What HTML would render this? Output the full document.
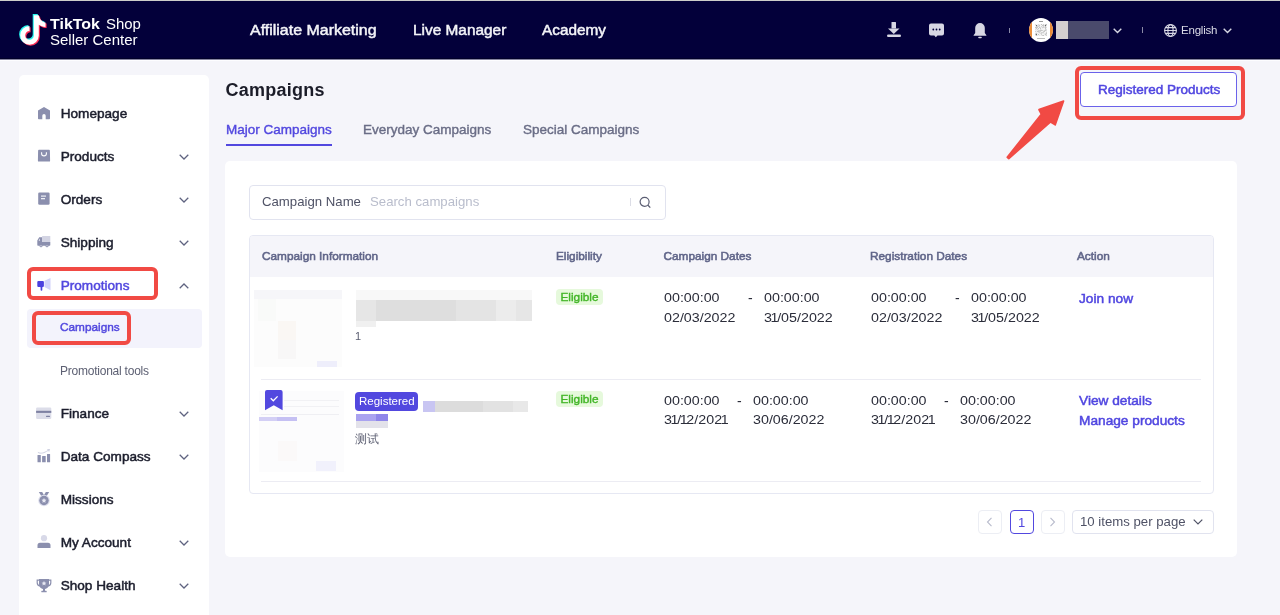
<!DOCTYPE html>
<html><head><meta charset="utf-8">
<style>
*{margin:0;padding:0;box-sizing:border-box}
html,body{width:1280px;height:615px;overflow:hidden;background:#f5f5fa;font-family:"Liberation Sans",sans-serif}
body{position:relative}
.a{position:absolute}
.t{position:absolute;line-height:1;white-space:nowrap}
.hdr{left:0;top:0;width:1280px;height:59px;background:#03003a;border-top:1px solid #cdcdca}
.nav{color:#f4f4f8;font-size:14px;-webkit-text-stroke:0.45px #f4f4f8;top:22.7px;transform-origin:0 0}
.side{left:19px;top:75px;width:190px;height:560px;background:#fff;border-radius:5px}
.si{color:#1c1e2d;font-weight:normal;font-size:13.6px;-webkit-text-stroke:0.5px #1c1e2d;left:60.7px}
.ch{position:absolute;left:178.6px;width:10px;height:6px;margin-top:-0.5px}
.card{left:225px;top:161px;width:1012px;height:395.5px;background:#fff;border-radius:5px}
.th{color:#62678a;font-size:11.8px;-webkit-text-stroke:0.55px #5f6488;top:250.5px}
.dt{position:absolute;color:#2b2d3a;font-size:13.6px;line-height:19.7px;white-space:nowrap;transform:scaleX(1.05);transform-origin:0 0}
.dt i{font-style:normal;margin:0 -1.3px}
.lnk{color:#5046e0;font-size:13.7px;-webkit-text-stroke:0.5px #5046e0;left:1079px}
.elig{position:absolute;left:556px;width:47px;height:16px;background:#e6f9dc;color:#41b526;font-size:11.8px;-webkit-text-stroke:0.4px #41b526;border-radius:4px;text-align:center;line-height:16px}
.red{position:absolute;border:4px solid #f14a44;border-radius:6px}
.sep{position:absolute;left:261px;width:940px;height:1px;background:#ececf3}
.pg{position:absolute;top:510px;height:24px;border:1px solid #eceef4;border-radius:4px;background:#fff}
svg{position:absolute;overflow:visible}
</style></head><body><div style="position:absolute;left:0;top:0;width:1280px;height:615px;will-change:transform">

<!-- HEADER -->
<div class="a hdr"></div>
<div class="a" style="left:0;top:58px;width:1280px;height:1px;background:#01002a"></div><div class="a" style="left:0;top:59px;width:1280px;height:1px;background:#85849f"></div><div class="a" style="left:0;top:60px;width:1280px;height:1px;background:#fdfdff"></div>

<!-- logo -->
<svg style="left:18px;top:13px" width="32" height="35" viewBox="0 0 32 35">
  <path d="M15.8 2.2H20.8C21.2 5.8 24 9.3 27.5 9.5V14C24.8 14 22.5 13 20.8 11.8V22.4A9.3 9.3 0 1 1 11.5 13.1V18.1A4.3 4.3 0 1 0 15.8 22.4Z" fill="#25f4ee" transform="translate(-1.1,-1.1)"/>
  <path d="M15.8 2.2H20.8C21.2 5.8 24 9.3 27.5 9.5V14C24.8 14 22.5 13 20.8 11.8V22.4A9.3 9.3 0 1 1 11.5 13.1V18.1A4.3 4.3 0 1 0 15.8 22.4Z" fill="#fe2c55" transform="translate(1.1,1.1)"/>
  <path d="M15.8 2.2H20.8C21.2 5.8 24 9.3 27.5 9.5V14C24.8 14 22.5 13 20.8 11.8V22.4A9.3 9.3 0 1 1 11.5 13.1V18.1A4.3 4.3 0 1 0 15.8 22.4Z" fill="#fff"/>
</svg>
<div class="t" style="left:50px;top:17.3px;font-size:14.5px;font-weight:bold;color:#fff;transform:scaleX(1.1);transform-origin:0 0">TikTok</div>
<div class="t" style="left:106px;top:17.3px;font-size:14.5px;color:#fff;transform:scaleX(1.03);transform-origin:0 0">Shop</div>
<div class="t" style="left:50px;top:31.5px;font-size:15px;color:#fff">Seller Center</div>

<div class="t nav" style="left:250px;transform:scaleX(1.14)">Affiliate Marketing</div>
<div class="t nav" style="left:412.5px;transform:scaleX(1.1)">Live Manager</div>
<div class="t nav" style="left:541.5px;transform:scaleX(1.095)">Academy</div>

<!-- header right icons -->
<svg style="left:886px;top:21px" width="16" height="17" viewBox="0 0 16 17" fill="#d7d7e3">
  <rect x="5.5" y="1" width="4.5" height="6.5" rx="0.5"/>
  <path d="M2 7.5h11.5L7.75 13z"/>
  <rect x="1" y="13.5" width="14" height="2.6" rx="1.3"/>
</svg>
<svg style="left:928px;top:22px" width="17" height="16" viewBox="0 0 17 16">
  <path fill="#d7d7e3" d="M3 1.5h11a2 2 0 0 1 2 2v8a2 2 0 0 1-2 2H9.5L7.8 15.2 6.3 13.5H3a2 2 0 0 1-2-2v-8a2 2 0 0 1 2-2z"/>
  <circle cx="5.3" cy="7.5" r="0.9" fill="#03003a"/><circle cx="8.5" cy="7.5" r="0.9" fill="#03003a"/><circle cx="11.7" cy="7.5" r="0.9" fill="#03003a"/>
</svg>
<svg style="left:972px;top:22px" width="16" height="17" viewBox="0 0 16 17" fill="#d7d7e3">
  <path d="M8 1a4.8 4.8 0 0 1 4.8 4.8v5.2l1.6 2.2v.6H1.6v-.6L3.2 11V5.8A4.8 4.8 0 0 1 8 1z"/>
  <rect x="6.2" y="14.7" width="3.6" height="1.6" rx="0.8"/>
</svg>
<div class="a" style="left:1009px;top:28px;width:1px;height:5px;background:#8a8aa6"></div>
<!-- avatar -->
<div class="a" style="left:1029px;top:18px;width:24px;height:24px;border-radius:50%;background:#fff;overflow:hidden">
  <div class="a" style="left:-2px;top:0;width:5px;height:24px;background:#ea8d3a"></div>
  <div class="a" style="left:21.3px;top:0;width:5px;height:24px;background:#ea8d3a"></div>
  <svg style="left:6px;top:6px" width="12" height="12" viewBox="0 0 12 12" shape-rendering="crispEdges"><rect x="0" y="0" width="1" height="1" fill="#dedede"/><rect x="1" y="0" width="1" height="1" fill="#f4f4f4"/><rect x="2" y="0" width="1" height="1" fill="#f4f4f4"/><rect x="3" y="0" width="1" height="1" fill="#dedede"/><rect x="4" y="0" width="1" height="1" fill="#ebebeb"/><rect x="5" y="0" width="1" height="1" fill="#f4f4f4"/><rect x="6" y="0" width="1" height="1" fill="#c4c4c4"/><rect x="7" y="0" width="1" height="1" fill="#f4f4f4"/><rect x="8" y="0" width="1" height="1" fill="#d2d2d2"/><rect x="9" y="0" width="1" height="1" fill="#f4f4f4"/><rect x="10" y="0" width="1" height="1" fill="#d2d2d2"/><rect x="11" y="0" width="1" height="1" fill="#c4c4c4"/><rect x="0" y="1" width="1" height="1" fill="#ebebeb"/><rect x="1" y="1" width="1" height="1" fill="#f4f4f4"/><rect x="2" y="1" width="1" height="1" fill="#dedede"/><rect x="3" y="1" width="1" height="1" fill="#dedede"/><rect x="4" y="1" width="1" height="1" fill="#c4c4c4"/><rect x="5" y="1" width="1" height="1" fill="#f4f4f4"/><rect x="6" y="1" width="1" height="1" fill="#f4f4f4"/><rect x="7" y="1" width="1" height="1" fill="#c4c4c4"/><rect x="8" y="1" width="1" height="1" fill="#c4c4c4"/><rect x="9" y="1" width="1" height="1" fill="#dedede"/><rect x="10" y="1" width="1" height="1" fill="#dedede"/><rect x="11" y="1" width="1" height="1" fill="#dedede"/><rect x="0" y="2" width="1" height="1" fill="#f4f4f4"/><rect x="1" y="2" width="1" height="1" fill="#c4c4c4"/><rect x="2" y="2" width="1" height="1" fill="#d2d2d2"/><rect x="3" y="2" width="1" height="1" fill="#d2d2d2"/><rect x="4" y="2" width="1" height="1" fill="#dedede"/><rect x="5" y="2" width="1" height="1" fill="#f4f4f4"/><rect x="6" y="2" width="1" height="1" fill="#d2d2d2"/><rect x="7" y="2" width="1" height="1" fill="#ebebeb"/><rect x="8" y="2" width="1" height="1" fill="#d2d2d2"/><rect x="9" y="2" width="1" height="1" fill="#ebebeb"/><rect x="10" y="2" width="1" height="1" fill="#c4c4c4"/><rect x="11" y="2" width="1" height="1" fill="#f4f4f4"/><rect x="0" y="3" width="1" height="1" fill="#c4c4c4"/><rect x="1" y="3" width="1" height="1" fill="#c4c4c4"/><rect x="2" y="3" width="1" height="1" fill="#c4c4c4"/><rect x="3" y="3" width="1" height="1" fill="#f4f4f4"/><rect x="4" y="3" width="1" height="1" fill="#c4c4c4"/><rect x="5" y="3" width="1" height="1" fill="#dedede"/><rect x="6" y="3" width="1" height="1" fill="#ebebeb"/><rect x="7" y="3" width="1" height="1" fill="#d2d2d2"/><rect x="8" y="3" width="1" height="1" fill="#d2d2d2"/><rect x="9" y="3" width="1" height="1" fill="#dedede"/><rect x="10" y="3" width="1" height="1" fill="#c4c4c4"/><rect x="11" y="3" width="1" height="1" fill="#dedede"/><rect x="0" y="4" width="1" height="1" fill="#ebebeb"/><rect x="1" y="4" width="1" height="1" fill="#c4c4c4"/><rect x="2" y="4" width="1" height="1" fill="#ebebeb"/><rect x="3" y="4" width="1" height="1" fill="#c4c4c4"/><rect x="4" y="4" width="1" height="1" fill="#f4f4f4"/><rect x="5" y="4" width="1" height="1" fill="#c4c4c4"/><rect x="6" y="4" width="1" height="1" fill="#f4f4f4"/><rect x="7" y="4" width="1" height="1" fill="#ebebeb"/><rect x="8" y="4" width="1" height="1" fill="#f4f4f4"/><rect x="9" y="4" width="1" height="1" fill="#f4f4f4"/><rect x="10" y="4" width="1" height="1" fill="#c4c4c4"/><rect x="11" y="4" width="1" height="1" fill="#f4f4f4"/><rect x="0" y="5" width="1" height="1" fill="#dedede"/><rect x="1" y="5" width="1" height="1" fill="#ebebeb"/><rect x="2" y="5" width="1" height="1" fill="#d2d2d2"/><rect x="3" y="5" width="1" height="1" fill="#ebebeb"/><rect x="4" y="5" width="1" height="1" fill="#f4f4f4"/><rect x="5" y="5" width="1" height="1" fill="#dedede"/><rect x="6" y="5" width="1" height="1" fill="#ebebeb"/><rect x="7" y="5" width="1" height="1" fill="#f4f4f4"/><rect x="8" y="5" width="1" height="1" fill="#f4f4f4"/><rect x="9" y="5" width="1" height="1" fill="#f4f4f4"/><rect x="10" y="5" width="1" height="1" fill="#d2d2d2"/><rect x="11" y="5" width="1" height="1" fill="#dedede"/><rect x="0" y="6" width="1" height="1" fill="#f4f4f4"/><rect x="1" y="6" width="1" height="1" fill="#ebebeb"/><rect x="2" y="6" width="1" height="1" fill="#ebebeb"/><rect x="3" y="6" width="1" height="1" fill="#d2d2d2"/><rect x="4" y="6" width="1" height="1" fill="#d2d2d2"/><rect x="5" y="6" width="1" height="1" fill="#c4c4c4"/><rect x="6" y="6" width="1" height="1" fill="#c4c4c4"/><rect x="7" y="6" width="1" height="1" fill="#d2d2d2"/><rect x="8" y="6" width="1" height="1" fill="#ebebeb"/><rect x="9" y="6" width="1" height="1" fill="#d2d2d2"/><rect x="10" y="6" width="1" height="1" fill="#c4c4c4"/><rect x="11" y="6" width="1" height="1" fill="#dedede"/><rect x="0" y="7" width="1" height="1" fill="#d2d2d2"/><rect x="1" y="7" width="1" height="1" fill="#ebebeb"/><rect x="2" y="7" width="1" height="1" fill="#c4c4c4"/><rect x="3" y="7" width="1" height="1" fill="#c4c4c4"/><rect x="4" y="7" width="1" height="1" fill="#d2d2d2"/><rect x="5" y="7" width="1" height="1" fill="#d2d2d2"/><rect x="6" y="7" width="1" height="1" fill="#f4f4f4"/><rect x="7" y="7" width="1" height="1" fill="#f4f4f4"/><rect x="8" y="7" width="1" height="1" fill="#d2d2d2"/><rect x="9" y="7" width="1" height="1" fill="#c4c4c4"/><rect x="10" y="7" width="1" height="1" fill="#f4f4f4"/><rect x="11" y="7" width="1" height="1" fill="#ebebeb"/><rect x="0" y="8" width="1" height="1" fill="#f4f4f4"/><rect x="1" y="8" width="1" height="1" fill="#ebebeb"/><rect x="2" y="8" width="1" height="1" fill="#f4f4f4"/><rect x="3" y="8" width="1" height="1" fill="#dedede"/><rect x="4" y="8" width="1" height="1" fill="#d2d2d2"/><rect x="5" y="8" width="1" height="1" fill="#ebebeb"/><rect x="6" y="8" width="1" height="1" fill="#d2d2d2"/><rect x="7" y="8" width="1" height="1" fill="#d2d2d2"/><rect x="8" y="8" width="1" height="1" fill="#d2d2d2"/><rect x="9" y="8" width="1" height="1" fill="#f4f4f4"/><rect x="10" y="8" width="1" height="1" fill="#f4f4f4"/><rect x="11" y="8" width="1" height="1" fill="#d2d2d2"/><rect x="0" y="9" width="1" height="1" fill="#dedede"/><rect x="1" y="9" width="1" height="1" fill="#c4c4c4"/><rect x="2" y="9" width="1" height="1" fill="#ebebeb"/><rect x="3" y="9" width="1" height="1" fill="#f4f4f4"/><rect x="4" y="9" width="1" height="1" fill="#ebebeb"/><rect x="5" y="9" width="1" height="1" fill="#dedede"/><rect x="6" y="9" width="1" height="1" fill="#d2d2d2"/><rect x="7" y="9" width="1" height="1" fill="#ebebeb"/><rect x="8" y="9" width="1" height="1" fill="#ebebeb"/><rect x="9" y="9" width="1" height="1" fill="#ebebeb"/><rect x="10" y="9" width="1" height="1" fill="#dedede"/><rect x="11" y="9" width="1" height="1" fill="#c4c4c4"/><rect x="0" y="10" width="1" height="1" fill="#c4c4c4"/><rect x="1" y="10" width="1" height="1" fill="#c4c4c4"/><rect x="2" y="10" width="1" height="1" fill="#f4f4f4"/><rect x="3" y="10" width="1" height="1" fill="#c4c4c4"/><rect x="4" y="10" width="1" height="1" fill="#f4f4f4"/><rect x="5" y="10" width="1" height="1" fill="#f4f4f4"/><rect x="6" y="10" width="1" height="1" fill="#d2d2d2"/><rect x="7" y="10" width="1" height="1" fill="#f4f4f4"/><rect x="8" y="10" width="1" height="1" fill="#f4f4f4"/><rect x="9" y="10" width="1" height="1" fill="#ebebeb"/><rect x="10" y="10" width="1" height="1" fill="#c4c4c4"/><rect x="11" y="10" width="1" height="1" fill="#dedede"/><rect x="0" y="11" width="1" height="1" fill="#ebebeb"/><rect x="1" y="11" width="1" height="1" fill="#c4c4c4"/><rect x="2" y="11" width="1" height="1" fill="#ebebeb"/><rect x="3" y="11" width="1" height="1" fill="#f4f4f4"/><rect x="4" y="11" width="1" height="1" fill="#ebebeb"/><rect x="5" y="11" width="1" height="1" fill="#f4f4f4"/><rect x="6" y="11" width="1" height="1" fill="#ebebeb"/><rect x="7" y="11" width="1" height="1" fill="#d2d2d2"/><rect x="8" y="11" width="1" height="1" fill="#c4c4c4"/><rect x="9" y="11" width="1" height="1" fill="#f4f4f4"/><rect x="10" y="11" width="1" height="1" fill="#ebebeb"/><rect x="11" y="11" width="1" height="1" fill="#d2d2d2"/><rect x="0.5" y="0.5" width="1.6" height="1.6" fill="#666"/><rect x="9.5" y="0.5" width="1.6" height="1.6" fill="#666"/><rect x="0.5" y="9.5" width="1.6" height="1.6" fill="#666"/></svg><div class="a" style="left:8px;top:20px;width:8px;height:1px;background:#bbb"></div><div class="a" style="left:10px;top:3px;width:4px;height:1px;background:#999"></div>
</div>
<div class="a" style="left:1056px;top:21px;width:12px;height:18px;background:#d4cfcf"></div>
<div class="a" style="left:1068px;top:21px;width:41px;height:18px;background:#4a4a6c"></div>
<svg style="left:1113px;top:28px" width="9" height="6" viewBox="0 0 9 6"><path d="M0.7 0.8L4.5 4.6 8.3 0.8" fill="none" stroke="#d7d7e3" stroke-width="1.4"/></svg>
<div class="a" style="left:1142px;top:27px;width:1px;height:6px;background:#8a8aa6"></div>
<svg style="left:1164px;top:24px" width="13" height="13" viewBox="0 0 13 13" fill="none" stroke="#d7d7e3" stroke-width="1.1">
  <circle cx="6.5" cy="6.5" r="5.9"/><ellipse cx="6.5" cy="6.5" rx="2.6" ry="5.9"/><path d="M0.6 6.5h11.8M1.4 3.6h10.2M1.4 9.4h10.2"/>
</svg>
<div class="t" style="left:1181px;top:24.5px;font-size:11.5px;color:#dadae6;letter-spacing:-0.2px">English</div>
<svg style="left:1223px;top:28px" width="9" height="6" viewBox="0 0 9 6"><path d="M0.7 0.8L4.5 4.6 8.3 0.8" fill="none" stroke="#d7d7e3" stroke-width="1.4"/></svg>

<!-- SIDEBAR -->
<div class="a side"></div>
<div class="a" style="left:27px;top:309px;width:175px;height:39px;background:#f3f3fc;border-radius:4px"></div>

<div class="t si" style="top:107px">Homepage</div>
<div class="t si" style="top:150px">Products</div>
<div class="t si" style="top:193px">Orders</div>
<div class="t si" style="top:236px">Shipping</div>
<div class="t si" style="top:279px;color:#5248df;-webkit-text-stroke-color:#5248df">Promotions</div>
<div class="t" style="left:60px;top:322.3px;font-size:11.8px;color:#5248df;-webkit-text-stroke:0.45px #5248df">Campaigns</div>
<div class="t" style="left:60px;top:365px;font-size:12px;color:#5d6073;letter-spacing:-0.23px">Promotional tools</div>
<div class="t si" style="top:407px">Finance</div>
<div class="t si" style="top:450px">Data Compass</div>
<div class="t si" style="top:493px">Missions</div>
<div class="t si" style="top:536px">My Account</div>
<div class="t si" style="top:579px">Shop Health</div>

<!-- chevrons -->
<svg class="ch" style="top:154px" viewBox="0 0 10 6"><path d="M0.7 0.7L5 5 9.3 0.7" fill="none" stroke="#5f6380" stroke-width="1.25"/></svg>
<svg class="ch" style="top:197px" viewBox="0 0 10 6"><path d="M0.7 0.7L5 5 9.3 0.7" fill="none" stroke="#5f6380" stroke-width="1.25"/></svg>
<svg class="ch" style="top:240px" viewBox="0 0 10 6"><path d="M0.7 0.7L5 5 9.3 0.7" fill="none" stroke="#5f6380" stroke-width="1.25"/></svg>
<svg class="ch" style="top:283px" viewBox="0 0 10 6"><path d="M0.7 5.3L5 1 9.3 5.3" fill="none" stroke="#5f6380" stroke-width="1.25"/></svg>
<svg class="ch" style="top:411px" viewBox="0 0 10 6"><path d="M0.7 0.7L5 5 9.3 0.7" fill="none" stroke="#5f6380" stroke-width="1.25"/></svg>
<svg class="ch" style="top:454px" viewBox="0 0 10 6"><path d="M0.7 0.7L5 5 9.3 0.7" fill="none" stroke="#5f6380" stroke-width="1.25"/></svg>
<svg class="ch" style="top:540px" viewBox="0 0 10 6"><path d="M0.7 0.7L5 5 9.3 0.7" fill="none" stroke="#5f6380" stroke-width="1.25"/></svg>
<svg class="ch" style="top:583px" viewBox="0 0 10 6"><path d="M0.7 0.7L5 5 9.3 0.7" fill="none" stroke="#5f6380" stroke-width="1.25"/></svg>

<!-- sidebar icons -->
<svg style="left:37px;top:106px" width="14" height="14" viewBox="0 0 14 14" fill="#8b8fae">
  <path d="M7 0.9L13 4.4V12.4a0.8 0.8 0 0 1-0.8 0.8H8.7V9.8a1.7 1.7 0 0 0-3.4 0v3.4H1.8a0.8 0.8 0 0 1-0.8-0.8V4.4z"/>
</svg>
<svg style="left:37px;top:149px" width="14" height="14" viewBox="0 0 14 14">
  <path fill="#8b8fae" d="M2 0.8h10a0.9 0.9 0 0 1 0.9 0.9l0.2 10a0.9 0.9 0 0 1-0.9 0.9H1.8a0.9 0.9 0 0 1-0.9-0.9l0.2-10A0.9 0.9 0 0 1 2 0.8z"/>
  <path d="M4.6 3.2v1.3a2.4 2.4 0 0 0 4.8 0V3.2" fill="none" stroke="#fff" stroke-width="1.1"/>
</svg>
<svg style="left:37px;top:192px" width="14" height="14" viewBox="0 0 14 14">
  <rect x="1.2" y="0.4" width="11.4" height="12.4" rx="1.3" fill="#8b8fae"/>
  <rect x="4" y="3.5" width="5" height="1.2" fill="#eef0f6"/><rect x="4" y="6" width="4" height="1.3" fill="#eef0f6"/>
</svg>
<svg style="left:37px;top:235px" width="14" height="13" viewBox="0 0 14 13">
  <rect x="5" y="0.9" width="8.3" height="6" rx="0.5" fill="#d3d4e3"/>
  <path fill="#8b8fae" d="M2.2 2.3h2.8v4.6h8.3v3.1a0.7 0.7 0 0 1-0.7 0.7H1a0.7 0.7 0 0 1-0.7-0.7V5.5z"/>
  <circle cx="4" cy="10.8" r="1.5" fill="#8b8fae"/><circle cx="10" cy="10.8" r="1.5" fill="#8b8fae"/>
  <circle cx="4" cy="10.8" r="0.6" fill="#fff"/><circle cx="10" cy="10.8" r="0.6" fill="#fff"/>
  <path d="M2.8 3.5l-1.2 2.2h1.5z" fill="#e6e7f0"/>
</svg>
<svg style="left:37px;top:278px" width="14" height="14" viewBox="0 0 14 14">
  <rect x="0.3" y="3" width="6.6" height="6" rx="1" fill="#4b40df"/>
  <rect x="3.6" y="8.5" width="1.7" height="4.3" rx="0.8" fill="#4b40df"/>
  <path d="M7.5 2.8L13.5 0v12.2L7.5 9z" fill="#d2d2fa"/>
</svg>
<svg style="left:36px;top:407px" width="16" height="13" viewBox="0 0 16 13">
  <rect x="0.1" y="0.6" width="15.2" height="11.4" rx="1.2" fill="#dcdde9"/>
  <rect x="0.1" y="3.8" width="15.2" height="2.1" fill="#7e81a2"/>
  <rect x="10" y="8.8" width="4" height="1.2" rx="0.5" fill="#7e81a2"/>
</svg>
<svg style="left:37px;top:448px" width="14" height="15" viewBox="0 0 14 15">
  <rect x="0.5" y="7" width="3.3" height="7.2" rx="0.3" fill="#8b8fae"/>
  <rect x="5.1" y="8.1" width="3.6" height="6.1" rx="0.3" fill="#8b8fae"/>
  <rect x="10" y="6" width="3.1" height="8.2" rx="0.3" fill="#8b8fae"/>
  <path d="M0.9 4.4C4 6 7 5 11 2.5" fill="none" stroke="#d0d2e2" stroke-width="1"/>
  <path d="M10 0.9l3.1 0.1-1 3z" fill="#d0d2e2"/>
</svg>
<svg style="left:37px;top:491px" width="14" height="16" viewBox="0 0 14 16">
  <path d="M1.8 1h3.4l2 3.5-2.3 1.5z" fill="#8b8fae"/><path d="M12.2 1H8.8l-2 3.5 2.3 1.5z" fill="#8b8fae"/>
  <circle cx="7" cy="9.5" r="5.8" fill="#dfe0ee"/>
  <circle cx="7" cy="9.5" r="4.7" fill="#8b8fae"/>
  <path d="M7 7l0.8 1.6 1.7 0.2-1.3 1.2 0.4 1.7L7 10.9l-1.6 0.8 0.4-1.7-1.3-1.2 1.7-0.2z" fill="#e8e9f3"/>
</svg>
<svg style="left:37px;top:534px" width="14" height="15" viewBox="0 0 14 15">
  <circle cx="7" cy="4.2" r="3.1" fill="#d8d9e8"/>
  <path d="M3 8.8h8a2.5 2.5 0 0 1 2.5 2.5v2.8H0.5v-2.8A2.5 2.5 0 0 1 3 8.8z" fill="#8b8fae"/>
</svg>
<svg style="left:36px;top:577px" width="16" height="16" viewBox="0 0 16 16">
  <path d="M3 2h10v5.2a5 5 0 0 1-10 0z" fill="#8b8fae"/>
  <path d="M3.4 3.2H1.2v2.6a3 3 0 0 0 3 3M12.6 3.2h2.2v2.6a3 3 0 0 1-3 3" fill="none" stroke="#8b8fae" stroke-width="1.2"/>
  <rect x="7" y="11.5" width="2" height="2.5" fill="#8b8fae"/>
  <rect x="5.3" y="13.7" width="5.4" height="1.6" rx="0.6" fill="#8b8fae"/>
  <path d="M8 4l0.8 1.5 1.6 0.2-1.2 1.1 0.3 1.6L8 7.6l-1.5 0.8 0.3-1.6-1.2-1.1 1.6-0.2z" fill="#e8e9f3"/>
</svg>

<!-- red annotations sidebar -->
<div class="red" style="left:27px;top:267px;width:131px;height:33px"></div>
<div class="red" style="left:32px;top:311px;width:99px;height:34px"></div>

<!-- CONTENT -->
<div class="t" style="left:225.5px;top:80.6px;font-size:18px;font-weight:bold;color:#1b1c28;letter-spacing:0.25px">Campaigns</div>
<div class="t" style="left:226px;top:122.9px;font-size:13.5px;color:#5248df;-webkit-text-stroke:0.4px #5248df">Major Campaigns</div>
<div class="a" style="left:226px;top:144px;width:106px;height:2px;background:#5248df"></div>
<div class="t" style="left:363px;top:122.9px;font-size:13.5px;color:#6a6d86;-webkit-text-stroke:0.4px #6a6d86">Everyday Campaigns</div>
<div class="t" style="left:523px;top:122.9px;font-size:13.5px;color:#6a6d86;-webkit-text-stroke:0.4px #6a6d86">Special Campaigns</div>

<!-- Registered Products button -->
<div class="a" style="left:1080px;top:72px;width:157px;height:35px;border:1px solid #6b62ea;border-radius:4px;background:#fff"></div>
<div class="t" style="left:1098px;top:82.6px;font-size:13.5px;color:#5046e0;-webkit-text-stroke:0.5px #5046e0">Registered Products</div>
<div class="red" style="left:1075px;top:66px;width:170px;height:54px"></div>
<!-- arrow -->
<svg style="left:0;top:0" width="1280" height="615" viewBox="0 0 1280 615">
  <path d="M1007.2 157.3 L1041.3 114.2 L1038.9 109.6 L1063.6 101 L1055.2 124.9 L1050.6 122 L1008.8 158.6 Z" fill="#f14a44" stroke="#f14a44" stroke-width="1.6" stroke-linejoin="round"/>
</svg>

<div class="a card"></div>

<!-- search -->
<div class="a" style="left:249px;top:185px;width:417px;height:35px;border:1px solid #e1e3ef;border-radius:4px;background:#fff"></div>
<div class="t" style="left:262px;top:195px;font-size:13.2px;color:#4f5266">Campaign Name</div>
<div class="t" style="left:370px;top:195px;font-size:13.2px;color:#b9bdcc">Search campaigns</div>
<div class="a" style="left:630px;top:198px;width:1px;height:8px;background:#dcdde6"></div>
<svg style="left:639px;top:196px" width="13" height="13" viewBox="0 0 13 13"><circle cx="5.6" cy="5.8" r="4.5" fill="none" stroke="#5b5e73" stroke-width="1.2"/><path d="M9 9.3l2.3 2.3" stroke="#5b5e73" stroke-width="1.3"/></svg>

<!-- table -->
<div class="a" style="left:249px;top:235px;width:965px;height:259px;border:1px solid #e6e8f3;border-radius:4px;background:#fff;overflow:hidden">
  <div class="a" style="left:0;top:0;width:965px;height:41px;background:#f5f5fa"></div>
</div>
<div class="t th" style="left:262px">Campaign Information</div>
<div class="t th" style="left:556px">Eligibility</div>
<div class="t th" style="left:663.5px">Campaign Dates</div>
<div class="t th" style="left:870px">Registration Dates</div>
<div class="t th" style="left:1077px">Action</div>

<!-- row 1 -->
<div class="a" style="left:254px;top:290px;width:88px;height:77px;background:#fcfcfc"></div>
<div class="a" style="left:254px;top:290px;width:88px;height:9px;background:#f6f6f9"></div>
<div class="a" style="left:258px;top:299px;width:18px;height:22px;background:#f9faf9"></div>
<div class="a" style="left:278px;top:321px;width:18px;height:19px;background:#faf7f4"></div>
<div class="a" style="left:278px;top:340px;width:18px;height:19px;background:#f8f7f7"></div>
<div class="a" style="left:317px;top:361px;width:20px;height:6px;background:#eeeefb"></div>
<div class="a" style="left:356px;top:290px;width:176px;height:11px;background:#f8f8f8"></div>
<div class="a" style="left:356px;top:300px;width:176px;height:21px;background:linear-gradient(90deg,#e6e6e6 0 20px,#dedede 20px 100px,#e4e4e4 100px 140px,#ececec 140px 160px,#e6e6e6 160px)"></div>
<div class="a" style="left:356px;top:321px;width:20px;height:6px;background:#f0f0f0"></div>
<div class="t" style="left:355px;top:331px;font-size:11px;color:#5a5d70">1</div>
<div class="elig" style="top:289px">Eligible</div>
<div class="dt" style="left:663.5px;top:287.9px">00:00:00<br>02/03/2022</div>
<div class="t" style="left:748px;top:291px;font-size:14px;color:#2b2d3a">-</div>
<div class="dt" style="left:764px;top:287.9px">00:00:00<br>3<i>1</i>/05/2022</div>
<div class="dt" style="left:870.5px;top:287.9px">00:00:00<br>02/03/2022</div>
<div class="t" style="left:955px;top:291px;font-size:14px;color:#2b2d3a">-</div>
<div class="dt" style="left:971px;top:287.9px">00:00:00<br>3<i>1</i>/05/2022</div>
<div class="t lnk" style="left:1079px;top:291.5px">Join now</div>
<div class="sep" style="top:379px"></div>

<!-- row 2 -->
<div class="a" style="left:259px;top:391px;width:85px;height:81px;background:#fcfcfd"></div>
<div class="a" style="left:259px;top:417px;width:38px;height:4px;background:#c5c0f3"></div>
<div class="a" style="left:284px;top:400px;width:55px;height:1px;background:#f1f1f4"></div>
<div class="a" style="left:284px;top:406px;width:55px;height:1px;background:#f1f1f4"></div>
<div class="a" style="left:261px;top:414px;width:78px;height:1px;background:#efeff3"></div>
<div class="a" style="left:259px;top:417px;width:18px;height:4px;background:#d3cff5"></div>
<div class="a" style="left:316px;top:461px;width:20px;height:10px;background:#f1f1fc"></div>
<div class="a" style="left:278px;top:441px;width:19px;height:20px;background:#fbf9f9"></div>
<svg style="left:265.2px;top:390px" width="18" height="20" viewBox="0 0 18 20"><path d="M2 0h13.6a2 2 0 0 1 2 2v18.2l-8.8-4.9L0 20.2V2a2 2 0 0 1 2-2z" fill="#5248df"/><path d="M5.7 8.3l2.6 2.5 4.3-4.4" fill="none" stroke="#fff" stroke-width="1.3"/></svg>
<div class="a" style="left:355px;top:392px;width:63px;height:19px;background:#5248df;border-radius:4px"></div>
<div class="t" style="left:359px;top:396px;font-size:11.5px;color:#fff">Registered</div>
<div class="a" style="left:423px;top:401px;width:105px;height:11px;background:linear-gradient(90deg,#c8c5f2 0 12px,#dcdcdc 12px 60px,#e2e2e2 60px 90px,#e8e8e8 90px)"></div>
<div class="a" style="left:356px;top:414px;width:32px;height:7px;background:linear-gradient(90deg,#aaa3f0 0 20px,#8f86ea 20px)"></div>
<div class="a" style="left:356px;top:421px;width:32px;height:7px;background:#e3e2ea"></div>
<div class="t" style="left:355px;top:433px;font-size:12px;color:#5a5d70">测试</div>
<div class="elig" style="top:391px">Eligible</div>
<div class="dt" style="left:663.5px;top:390.7px">00:00:00<br>3<i>1</i>/<i>1</i>2/202<i>1</i></div>
<div class="t" style="left:737px;top:394px;font-size:14px;color:#2b2d3a">-</div>
<div class="dt" style="left:753px;top:390.7px">00:00:00<br>30/06/2022</div>
<div class="dt" style="left:870.5px;top:390.7px">00:00:00<br>3<i>1</i>/<i>1</i>2/202<i>1</i></div>
<div class="t" style="left:944px;top:394px;font-size:14px;color:#2b2d3a">-</div>
<div class="dt" style="left:960px;top:390.7px">00:00:00<br>30/06/2022</div>
<div class="t lnk" style="left:1079px;top:393.7px">View details</div>
<div class="t lnk" style="left:1079px;top:414.2px">Manage products</div>
<div class="sep" style="top:481px"></div>

<!-- pagination -->
<div class="pg" style="left:978px;width:24px"></div>
<svg style="left:986px;top:517px" width="7" height="10" viewBox="0 0 7 10"><path d="M5.5 0.8L1.5 5l4 4.2" fill="none" stroke="#b8bbcc" stroke-width="1.1"/></svg>
<div class="pg" style="left:1010px;width:24px;border-color:#5248df"></div>
<div class="t" style="left:1018px;top:516px;font-size:13px;color:#5248df">1</div>
<div class="pg" style="left:1041px;width:24px"></div>
<svg style="left:1049px;top:517px" width="7" height="10" viewBox="0 0 7 10"><path d="M1.5 0.8L5.5 5l-4 4.2" fill="none" stroke="#b8bbcc" stroke-width="1.1"/></svg>
<div class="pg" style="left:1072px;width:142px;border-color:#e1e3ef"></div>
<div class="t" style="left:1080px;top:515px;font-size:13.2px;color:#4f5266">10 items per page</div>
<svg style="left:1193px;top:519px" width="10" height="6" viewBox="0 0 10 6"><path d="M0.7 0.7L5 5 9.3 0.7" fill="none" stroke="#4f5266" stroke-width="1.2"/></svg>

</div></body></html>
